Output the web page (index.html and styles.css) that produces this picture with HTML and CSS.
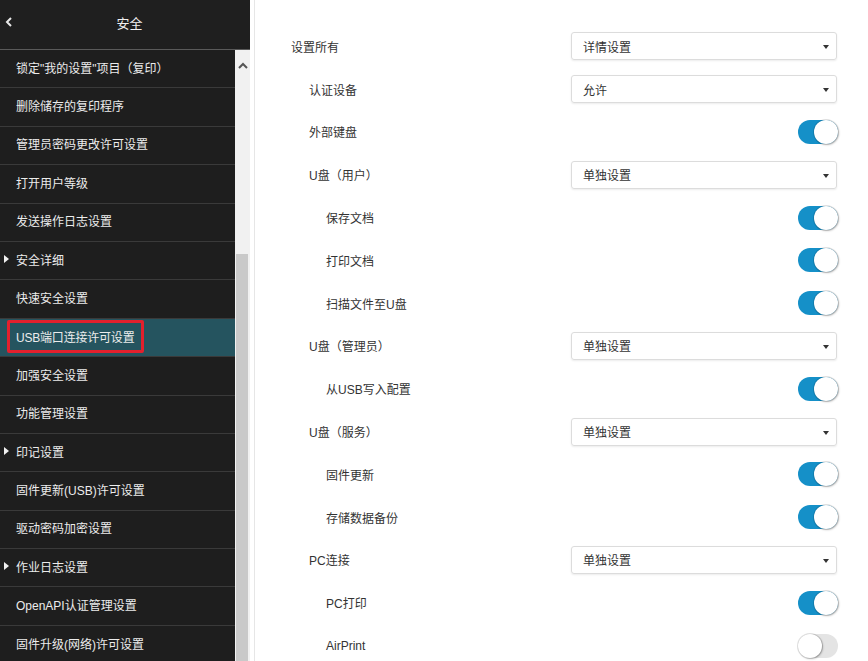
FILE: index.html
```html
<!DOCTYPE html>
<html lang="zh">
<head>
<meta charset="utf-8">
<title>安全</title>
<link rel="stylesheet" href="styles.css">
</head>
<body>
<div class="app">
  <aside class="sidebar">
    <div class="side-header">
      <span class="back"><svg width="8" height="10" viewBox="0 0 8 10"><path d="M6 1 L2 5 L6 9" fill="none" stroke="#e8e8e8" stroke-width="2"/></svg></span>
      <span class="side-title">安全</span>
    </div>
    <div class="side-body">
      <ul class="menu">
        <li class="item">锁定"我的设置"项目（复印）</li>
        <li class="item">删除储存的复印程序</li>
        <li class="item">管理员密码更改许可设置</li>
        <li class="item">打开用户等级</li>
        <li class="item">发送操作日志设置</li>
        <li class="item group">安全详细</li>
        <li class="item">快速安全设置</li>
        <li class="item active"><span class="mark">USB端口连接许可设置</span></li>
        <li class="item">加强安全设置</li>
        <li class="item">功能管理设置</li>
        <li class="item group">印记设置</li>
        <li class="item">固件更新(USB)许可设置</li>
        <li class="item">驱动密码加密设置</li>
        <li class="item group">作业日志设置</li>
        <li class="item">OpenAPI认证管理设置</li>
        <li class="item">固件升级(网络)许可设置</li>
      </ul>
      <div class="scrollbar">
        <div class="sb-up"><svg width="10" height="7" viewBox="0 0 10 7"><path d="M1 6 L5 2 L9 6" fill="none" stroke="#555" stroke-width="2"/></svg></div>
        <div class="sb-space"></div>
        <div class="sb-thumb"></div>
      </div>
    </div>
  </aside>
  <main class="content">
    <div class="row l0"><span class="label">设置所有</span><div class="select">详情设置<i class="caret"></i></div></div>
    <div class="row l1"><span class="label">认证设备</span><div class="select">允许<i class="caret"></i></div></div>
    <div class="row l1"><span class="label">外部键盘</span><div class="toggle on"><i class="knob"></i></div></div>
    <div class="row l1"><span class="label">U盘（用户）</span><div class="select">单独设置<i class="caret"></i></div></div>
    <div class="row l2"><span class="label">保存文档</span><div class="toggle on"><i class="knob"></i></div></div>
    <div class="row l2"><span class="label">打印文档</span><div class="toggle on"><i class="knob"></i></div></div>
    <div class="row l2"><span class="label">扫描文件至U盘</span><div class="toggle on"><i class="knob"></i></div></div>
    <div class="row l1"><span class="label">U盘（管理员）</span><div class="select">单独设置<i class="caret"></i></div></div>
    <div class="row l2"><span class="label">从USB写入配置</span><div class="toggle on"><i class="knob"></i></div></div>
    <div class="row l1"><span class="label">U盘（服务）</span><div class="select">单独设置<i class="caret"></i></div></div>
    <div class="row l2"><span class="label">固件更新</span><div class="toggle on"><i class="knob"></i></div></div>
    <div class="row l2"><span class="label">存储数据备份</span><div class="toggle on"><i class="knob"></i></div></div>
    <div class="row l1"><span class="label">PC连接</span><div class="select">单独设置<i class="caret"></i></div></div>
    <div class="row l2"><span class="label">PC打印</span><div class="toggle on"><i class="knob"></i></div></div>
    <div class="row l2"><span class="label">AirPrint</span><div class="toggle off"><i class="knob"></i></div></div>
  </main>
</div>
</body>
</html>
```

FILE: styles.css
```css
html, body {
  margin: 0;
  padding: 0;
  height: 100%;
  overflow: hidden;
}
body {
  font-family: "Liberation Sans", "Noto Sans CJK SC", sans-serif;
  font-size: 12px;
  background: #fff;
}
.app {
  display: flex;
  height: 661px;
}
.sidebar {
  width: 250px;
  flex: none;
  display: flex;
  flex-direction: column;
  background: #1e1e1e;
}
.side-header {
  height: 49px;
  flex: none;
  display: flex;
  align-items: center;
  border-bottom: 1px solid #5a5a5a;
  color: #f0f0f0;
  background: #1f1f1f;
}
.back {
  display: flex;
  padding-left: 5px;
  margin-top: -5px;
}
.side-title {
  flex: 1;
  text-align: center;
  font-size: 13px;
  margin-left: -8px;
  margin-top: -5px;
  padding-left: 4px;
}
.side-body {
  flex: 1;
  display: flex;
  min-height: 0;
}
.menu {
  list-style: none;
  margin: 0;
  padding: 0;
  width: 235px;
  flex: none;
  overflow: hidden;
}
.item {
  box-sizing: border-box;
  height: 38.4px;
  padding-bottom: 3px;
  border-bottom: 1px solid #3a3a3a;
  display: flex;
  align-items: center;
  padding-left: 16px;
  color: #ececec;
  position: relative;
  white-space: nowrap;
}
.item.group::before {
  content: "";
  position: absolute;
  left: 4px;
  top: 50%;
  margin-top: -6px;
  border-left: 5px solid #f0f0f0;
  border-top: 4px solid transparent;
  border-bottom: 4px solid transparent;
}
.item.active {
  background: #25545f;
  padding-bottom: 1px;
}
.mark {
  display: inline-block;
  border: 3px solid #e3202d;
  border-radius: 2px;
  padding: 5px 7px 5px 6px;
  margin-left: -9px;
  letter-spacing: -0.2px;
}
.scrollbar {
  width: 15px;
  flex: none;
  background: #f1f1f1;
  display: flex;
  flex-direction: column;
}
.sb-up {
  height: 34px;
  display: flex;
  justify-content: center;
  padding-top: 12px;
  box-sizing: border-box;
  padding-left: 1px;
}
.sb-space {
  height: 170px;
}
.sb-thumb {
  flex: 1;
  background: #c9c9c9;
  margin-left: 1px;
  margin-right: 2px;
}
.content {
  flex: 1;
  margin-left: 4px;
  border-left: 1px solid #e6e6e6;
  padding: 25px 31px 0 36px;
  color: #333;
}
.row {
  height: 42.8px;
  display: flex;
  align-items: center;
  justify-content: space-between;
}
.row.l1 .label { padding-left: 18px; }
.row.l2 .label { padding-left: 35px; }
.select {
  width: 266px;
  height: 28px;
  box-sizing: border-box;
  border: 1px solid #dcdcdc;
  border-radius: 3px;
  box-shadow: 0 1px 2px rgba(0,0,0,0.08);
  display: flex;
  align-items: center;
  padding-left: 11px;
  position: relative;
  color: #333;
}
.caret {
  position: absolute;
  right: 7px;
  top: 12px;
  border-top: 4px solid #333;
  border-left: 3px solid transparent;
  border-right: 3px solid transparent;
}
.toggle {
  width: 40px;
  height: 24px;
  border-radius: 12px;
  position: relative;
  margin-right: -1px;
}
.toggle.on { background: #1590c8; }
.toggle.off { background: #e4e4e4; }
.knob {
  position: absolute;
  top: 0;
  width: 24px;
  height: 24px;
  border-radius: 50%;
  background: #fff;
  box-shadow: 0 0 0 1px rgba(0,0,0,0.12), 1px 1px 2px rgba(0,0,0,0.25);
}
.toggle.on .knob { right: 0; }
.toggle.off .knob { left: 0; }
```
